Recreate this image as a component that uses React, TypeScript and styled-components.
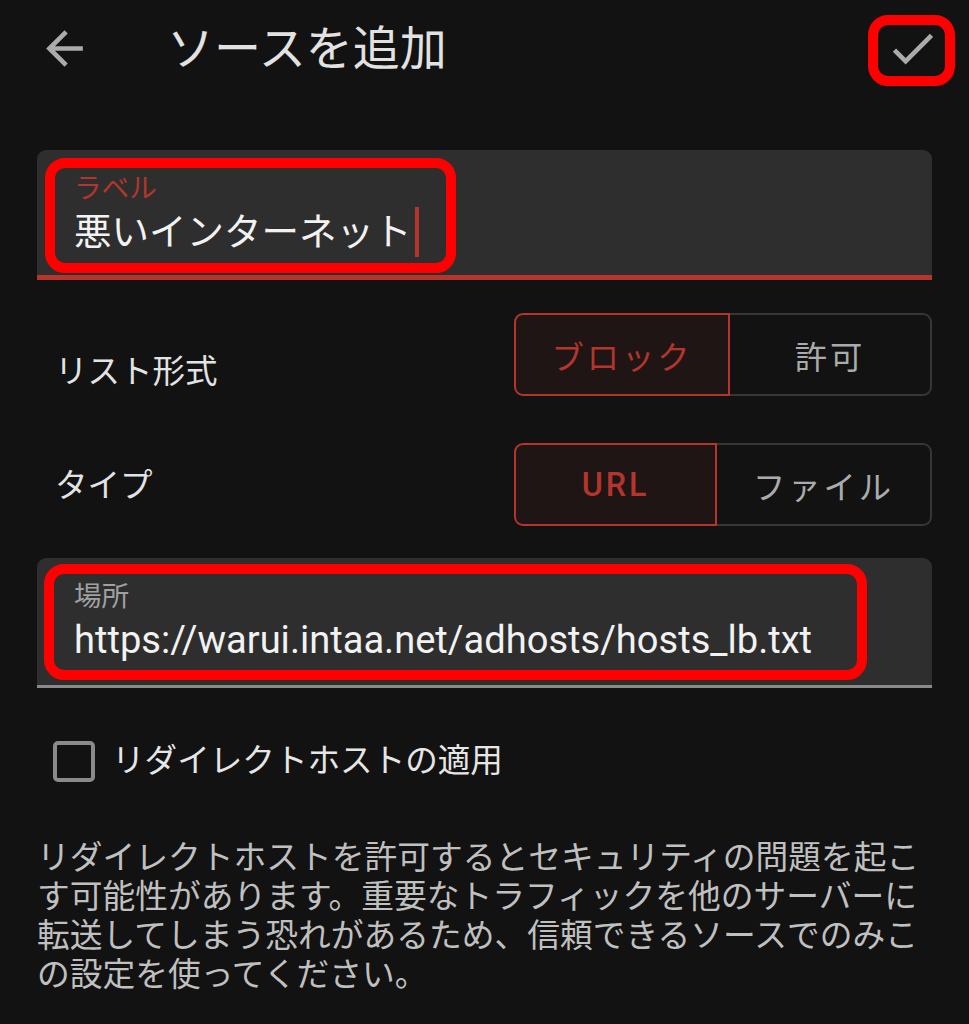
import React from "react";
import styled, { createGlobalStyle } from "styled-components";

const FONT = `Roboto, "Noto Sans CJK JP", sans-serif`;
const RED = "#b3352b";

const GlobalStyle = createGlobalStyle`
  html, body { margin: 0; padding: 0; background: #121212; }
  body { font-family: ${FONT}; -webkit-font-smoothing: antialiased; }
  * { box-sizing: border-box; }
`;

const Screen = styled.div`
  width: 969px;
  height: 1024px;
  background: #121212;
  overflow: hidden;
`;

const Header = styled.header`
  height: 97px;
  display: flex;
  align-items: center;
  padding: 0 29px 0 37px;
`;

const IconButton = styled.div`
  position: relative;
  width: 55px;
  height: 55px;
  flex: none;
  color: #ababab;
  svg {
    display: block;
    width: 55px;
    height: 55px;
  }
`;

const Title = styled.h1`
  flex: 1;
  margin: 0 0 0 75px;
  font-size: 47px;
  font-weight: 400;
  line-height: 56px;
  color: #e2e2e2;
  white-space: nowrap;
`;

const Highlight = styled.div<{ $l: number; $t: number; $w: number; $h: number }>`
  position: absolute;
  left: ${(p) => p.$l}px;
  top: ${(p) => p.$t}px;
  width: ${(p) => p.$w}px;
  height: ${(p) => p.$h}px;
  border: 10px solid #ff0000;
  border-radius: 20px;
  pointer-events: none;
`;

const Content = styled.main`
  display: flex;
  flex-direction: column;
  padding: 53px 37px 0 37px;
`;

const Field = styled.div<{ $focused?: boolean; $gap?: number }>`
  position: relative;
  height: 130px;
  margin-top: ${(p) => p.$gap ?? 0}px;
  padding: 22px 37px 0 37px;
  background: #2e2e2e;
  border-radius: 9px 9px 0 0;
  border-bottom: ${(p) => (p.$focused ? `5px solid ${RED}` : "3px solid #8a8a8a")};
`;

const FieldLabel = styled.div<{ $focused?: boolean }>`
  font-size: 27.6px;
  line-height: 33px;
  color: ${(p) => (p.$focused ? RED : "#a0a0a0")};
`;

const FieldValue = styled.div<{ $size?: number }>`
  margin-top: 5px;
  font-size: ${(p) => p.$size ?? 37.5}px;
  line-height: 44px;
  color: #f2f2f2;
  white-space: nowrap;
`;

const Caret = styled.span`
  display: inline-block;
  width: 4px;
  height: 50px;
  margin: -3px 0 -3px 3px;
  vertical-align: top;
  background: ${RED};
`;

const OptionRow = styled.div<{ $gap: number }>`
  display: flex;
  align-items: flex-start;
  justify-content: space-between;
  height: 83px;
  margin-top: ${(p) => p.$gap}px;
`;

const RowLabel = styled.div<{ $top: number }>`
  margin-top: ${(p) => p.$top}px;
  padding-left: 18px;
  font-size: 32.5px;
  line-height: 40px;
  color: #e3e3e3;
`;

const ToggleGroup = styled.div`
  display: flex;
  width: 418px;
  height: 83px;
`;

const Segment = styled.div<{ $selected?: boolean; $width?: number; $bold?: boolean }>`
  display: flex;
  align-items: center;
  justify-content: center;
  height: 83px;
  ${(p) => (p.$width ? `width: ${p.$width}px; flex: none;` : "flex: 1;")}
  font-size: 32.3px;
  letter-spacing: 2.9px;
  font-weight: ${(p) => (p.$bold ? 500 : 400)};
  color: ${(p) => (p.$selected ? RED : "#ababab")};
  background: ${(p) => (p.$selected ? "#1f1514" : "transparent")};
  border: 2.5px solid ${(p) => (p.$selected ? RED : "#363636")};
  border-left-width: ${(p) => (p.$selected ? "2.5px" : "0")};
  border-radius: ${(p) => (p.$selected ? "9px 0 0 9px" : "0 9px 9px 0")};
`;

const CheckRow = styled.label`
  display: flex;
  align-items: center;
  height: 41px;
  margin-top: 53px;
  padding-left: 16px;
  gap: 17px;
`;

const CheckBox = styled.span`
  width: 42px;
  height: 41px;
  flex: none;
  border: 4.6px solid #8a8a8a;
  border-radius: 5px;
`;

const CheckLabel = styled.span`
  font-size: 32.6px;
  line-height: 41px;
  color: #e6e6e6;
`;

const Note = styled.p`
  margin: 57px 0 0 0;
  font-size: 32.75px;
  line-height: 39px;
  color: #c0c0c0;
`;

const BackIcon = () => (
  <svg viewBox="0 0 24 24" fill="currentColor">
    <path d="M20 11H7.83l5.59-5.59L12 4l-8 8 8 8 1.41-1.41L7.83 13H20v-2z" />
  </svg>
);

const CheckIcon = () => (
  <svg viewBox="0 0 24 24" fill="currentColor">
    <path d="M9 16.17L4.83 12l-1.42 1.41L9 19 21 7l-1.41-1.41z" />
  </svg>
);

export default function App() {
  return (
    <Screen>
      <GlobalStyle />
      <Header>
        <IconButton>
          <BackIcon />
        </IconButton>
        <Title>ソースを追加</Title>
        <IconButton>
          <CheckIcon />
          <Highlight $l={-17} $t={-6} $w={87} $h={71} />
        </IconButton>
      </Header>
      <Content>
        <Field $focused>
          <FieldLabel $focused>ラベル</FieldLabel>
          <FieldValue>
            悪いインターネット
            <Caret />
          </FieldValue>
          <Highlight $l={8} $t={8} $w={411} $h={115} />
        </Field>

        <OptionRow $gap={33}>
          <RowLabel $top={39}>リスト形式</RowLabel>
          <ToggleGroup>
            <Segment $selected $width={216}>
              ブロック
            </Segment>
            <Segment>許可</Segment>
          </ToggleGroup>
        </OptionRow>

        <OptionRow $gap={47}>
          <RowLabel $top={23}>タイプ</RowLabel>
          <ToggleGroup>
            <Segment $selected $bold $width={203}>
              URL
            </Segment>
            <Segment>ファイル</Segment>
          </ToggleGroup>
        </OptionRow>

        <Field $gap={32}>
          <FieldLabel>場所</FieldLabel>
          <FieldValue $size={38.1}>https://warui.intaa.net/adhosts/hosts_lb.txt</FieldValue>
          <Highlight $l={7} $t={6} $w={823} $h={116} />
        </Field>

        <CheckRow>
          <CheckBox />
          <CheckLabel>リダイレクトホストの適用</CheckLabel>
        </CheckRow>

        <Note>
          リダイレクトホストを許可するとセキュリティの問題を起こす可能性があります。重要なトラフィックを他のサーバーに転送してしまう恐れがあるため、信頼できるソースでのみこの設定を使ってください。
        </Note>
      </Content>
    </Screen>
  );
}
